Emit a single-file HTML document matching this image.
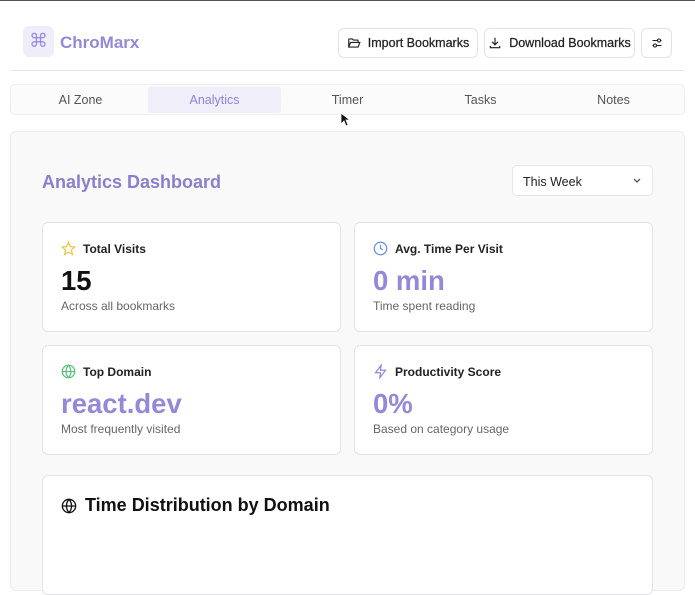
<!DOCTYPE html><html><head><style>
*{box-sizing:border-box;margin:0;padding:0}
body{width:695px;height:573px;overflow:hidden;background:#fff;font-family:"Liberation Sans",sans-serif;position:relative;border-top:1px solid #555}
.abs{position:absolute}
.btn{position:absolute;top:27px;height:30px;border:1px solid #e3e3e6;border-radius:6px;background:#fff;display:flex;align-items:center;justify-content:center;gap:7px;font-size:12.5px;color:#222;white-space:nowrap;-webkit-text-stroke:.25px #222}
.tab{position:absolute;top:86px;height:26px;width:133px;display:flex;align-items:center;justify-content:center;font-size:12.5px;color:#555}
.card{position:absolute;background:#fff;border:1px solid #e3e3e6;border-radius:6px;width:299px;height:110px}
.card .h{position:absolute;left:18px;top:18px;display:flex;align-items:center;gap:7px;font-size:12px;font-weight:bold;color:#222}
.card .v{position:absolute;left:18px;top:42px;font-size:27.5px;font-weight:bold}
.card .s{position:absolute;left:18px;top:76px;font-size:12px;color:#666}
</style></head><body>
<div class="abs" style="left:23px;top:25px;width:31px;height:31px;background:#efedf8;border-radius:6px;display:flex;align-items:center;justify-content:center;color:#9a8ee0;font-size:19px">⌘</div>
<div class="abs" style="left:60px;top:32px;font-size:17px;font-weight:bold;color:#9588d8">ChroMarx</div>
<div class="btn" style="left:338px;width:140px"><svg width="14" height="14" viewBox="0 0 24 24" fill="none" stroke="#222" stroke-width="2"><path d="M3 19V6a1 1 0 0 1 1-1h5l2 2h7a1 1 0 0 1 1 1v2M3 19l3-8h16l-3 8z"/></svg>Import Bookmarks</div>
<div class="btn" style="left:484px;width:151px"><svg width="14" height="14" viewBox="0 0 24 24" fill="none" stroke="#222" stroke-width="2"><path d="M12 3v12M7 10l5 5 5-5M4 17v3h16v-3"/></svg>Download Bookmarks</div>
<div class="btn" style="left:641px;width:31px"><svg width="12" height="12" viewBox="0 0 24 24" fill="none" stroke="#222" stroke-width="2"><path d="M3 7h10M19 7h2M3 17h2M11 17h10"/><circle cx="16" cy="7" r="3"/><circle cx="8" cy="17" r="3"/></svg></div>
<div class="abs" style="left:10px;top:69px;width:675px;height:1px;background:#e6e6e8"></div>
<div class="abs" style="left:10px;top:83px;width:675px;height:31px;border:1px solid #eeeef0;border-radius:5px;background:#fbfbfc"></div>
<div class="tab" style="left:14px">AI Zone</div>
<div class="tab" style="left:148px;background:#efeef9;color:#8f84d6;border-radius:3px">Analytics</div>
<div class="tab" style="left:281px">Timer</div>
<div class="tab" style="left:414px">Tasks</div>
<div class="tab" style="left:547px">Notes</div>
<div class="abs" style="left:10px;top:130px;width:675px;height:460px;border:1px solid #ececee;border-radius:6px;background:#f9f9fa"></div>
<div class="abs" style="left:42px;top:171px;font-size:18px;font-weight:bold;color:#8a7fcc">Analytics Dashboard</div>
<div class="abs" style="left:512px;top:164px;width:141px;height:31px;border:1px solid #e6e6e8;border-radius:5px;background:#fff;font-size:12.5px;color:#222;padding:9px 10px">This Week<svg class="abs" style="right:10px;top:11px" width="10" height="8" viewBox="0 0 10 8" fill="none" stroke="#555" stroke-width="1.3"><path d="M2 2l3 3 3-3"/></svg></div>
<div class="card" style="left:42px;top:221px"><div class="h"><svg width="15" height="15" viewBox="0 0 24 24" fill="none" stroke="#e8c84a" stroke-width="2"><path d="M12 2l3 7 7 .6-5.4 4.7 1.7 7.2L12 17.8 5.7 21.5l1.7-7.2L2 9.6 9 9z"/></svg>Total Visits</div><div class="v" style="color:#111">15</div><div class="s">Across all bookmarks</div></div>
<div class="card" style="left:354px;top:221px"><div class="h"><svg width="15" height="15" viewBox="0 0 24 24" fill="none" stroke="#6b8fd8" stroke-width="2"><circle cx="12" cy="12" r="10"/><path d="M12 6v6l4 2"/></svg>Avg. Time Per Visit</div><div class="v" style="color:#9588d8">0 min</div><div class="s">Time spent reading</div></div>
<div class="card" style="left:42px;top:344px"><div class="h"><svg width="15" height="15" viewBox="0 0 24 24" fill="none" stroke="#5cc27a" stroke-width="2"><circle cx="12" cy="12" r="10"/><path d="M2 12h20M12 2a15 15 0 0 1 0 20M12 2a15 15 0 0 0 0 20"/></svg>Top Domain</div><div class="v" style="color:#9588d8">react.dev</div><div class="s">Most frequently visited</div></div>
<div class="card" style="left:354px;top:344px"><div class="h"><svg width="15" height="15" viewBox="0 0 24 24" fill="none" stroke="#9588d8" stroke-width="2"><path d="M13 2L4 14h8l-1 8 9-12h-8z"/></svg>Productivity Score</div><div class="v" style="color:#9588d8">0%</div><div class="s">Based on category usage</div></div>
<div class="card" style="left:42px;top:474px;width:611px;height:120px"><div class="h" style="top:19px;font-size:18px;color:#111;gap:8px"><svg width="16" height="16" viewBox="0 0 24 24" fill="none" stroke="#111" stroke-width="2"><circle cx="12" cy="12" r="10"/><path d="M2 12h20M12 2a15 15 0 0 1 0 20M12 2a15 15 0 0 0 0 20"/></svg>Time Distribution by Domain</div></div>
<svg class="abs" style="left:340px;top:111px" width="10" height="15" viewBox="0 0 10 15"><path d="M1 1v11l3-3 2 5 2-1-2-5h4z" fill="#111" stroke="#fff" stroke-width=".8"/></svg>
</body></html>
